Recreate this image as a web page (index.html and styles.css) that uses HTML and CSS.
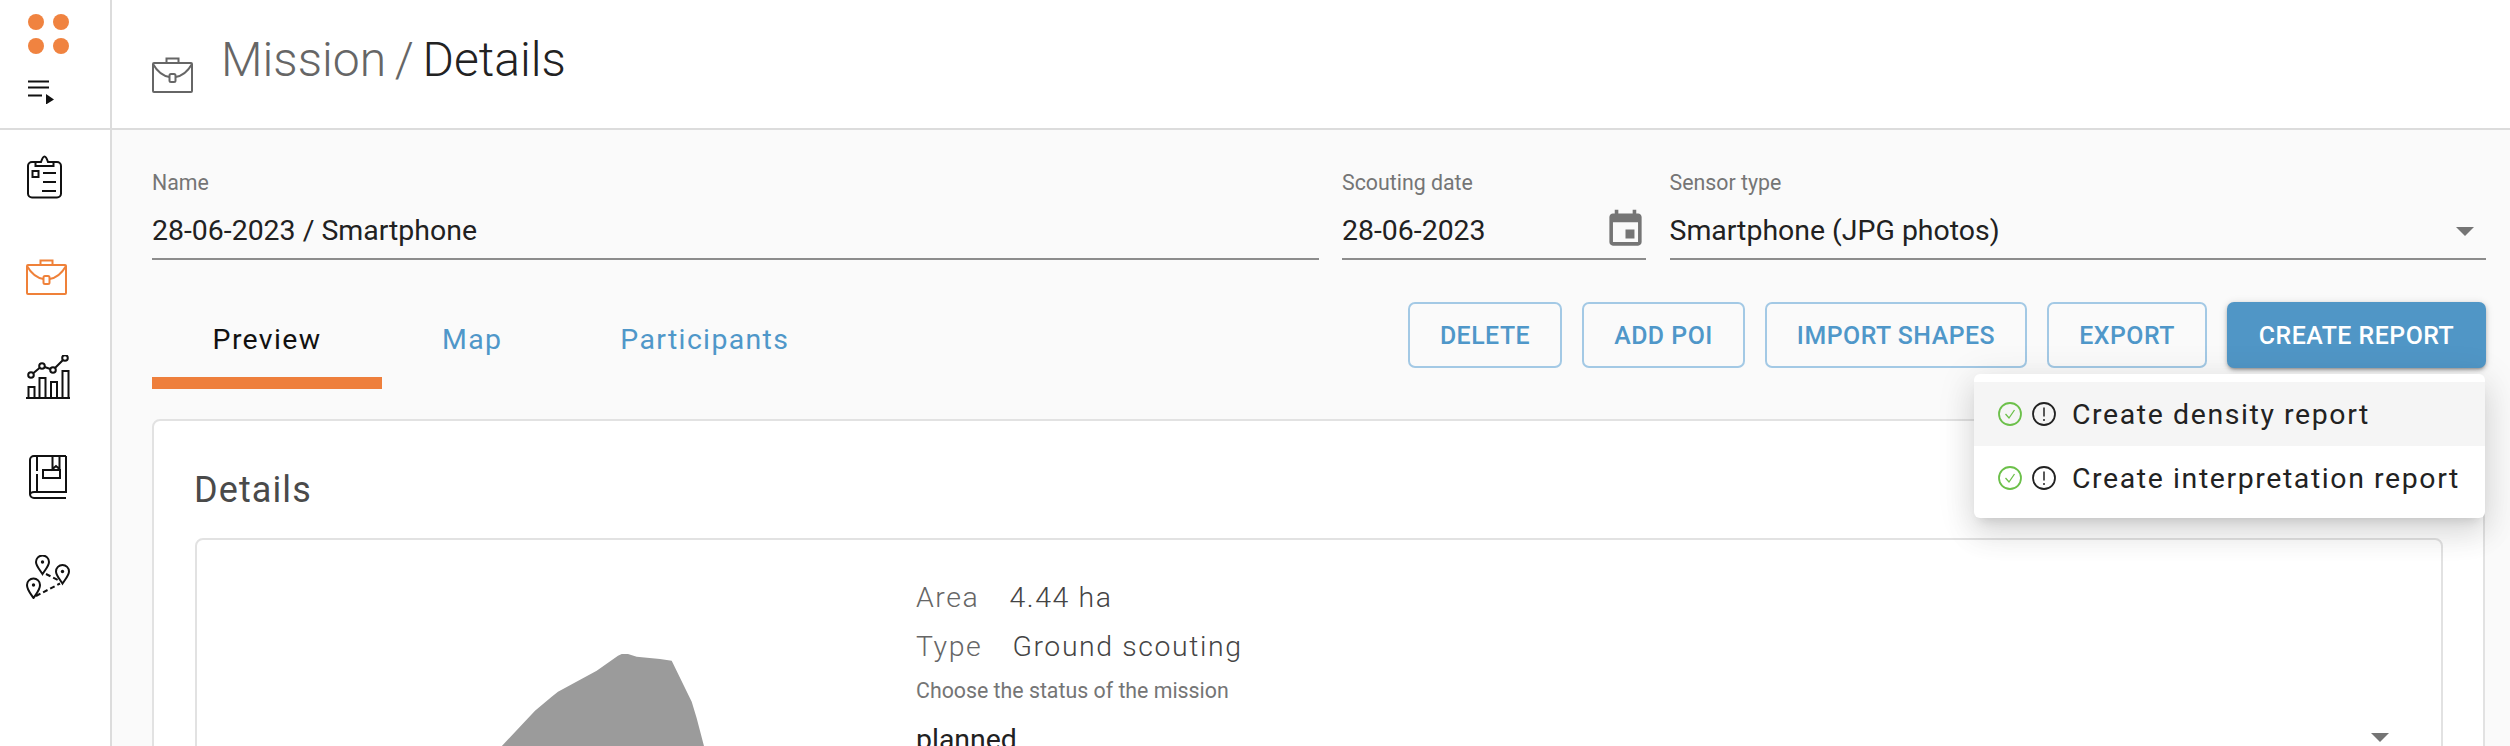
FILE: index.html
```html
<!DOCTYPE html>
<html lang="en">
<head>
<meta charset="utf-8">
<title>Mission / Details</title>
<link rel="stylesheet" href="styles.css">
</head>
<body>
<div class="app">
  <aside class="sidebar">
    <div class="brand">
      <div class="dots"><span class="dot"></span><span class="dot"></span><span class="dot"></span><span class="dot"></span></div>
      <svg class="menu-toggle" viewBox="0 0 28 24" width="28" height="24"><path d="M0 1.500h21M0 7.500h21M0 15.500h14" fill="none" stroke="#111" stroke-width="2"/><path d="M18 14l8 5.500-8 5z" fill="#111"/></svg>
    </div>
    <nav class="nav">
      <svg class="nav-icon" viewBox="0 0 44 44" width="44" height="44"><g fill="none" stroke="#111" stroke-width="2"><rect x="2" y="7" width="33" height="35.500" rx="4"/><path d="M9.500 11V7h5.500c1-3 2-5.500 3.500-5.500S21 4 22 7h5.500v4z" fill="#fff"/><rect x="6.500" y="16" width="6" height="6"/><path d="M17 18h13M17 27h13M16 36h14"/></g></svg>
      <svg class="nav-icon" viewBox="0 0 44 44" width="44" height="44"><use href="#case" transform="translate(0 4)" stroke="#ef8139"/></svg>
      <svg class="nav-icon" viewBox="0 0 44 44" width="44" height="44"><g fill="none" stroke="#111" stroke-width="2"><path d="M0 43h44" stroke-width="2"/><path d="M2.500 43V32h6v11M13.500 43V23h6v20M25 43V27h6v16M36.500 43V16h6v27"/><circle cx="5" cy="20" r="2.800"/><circle cx="16" cy="11" r="2.800"/><circle cx="27" cy="15" r="2.800"/><circle cx="39" cy="3" r="2.800"/><path d="M7.200 18.200l6.600-5.400M18.700 12l5.600 2M29 13l8-8"/></g></svg>
      <svg class="nav-icon" viewBox="0 0 44 44" width="44" height="44"><g fill="none" stroke="#111" stroke-width="2"><path d="M40 1H8a4 4 0 0 0-4 4v34a4 4 0 0 0 4 4h32M40 1v36H8a4 3 0 0 0-4 3"/><path d="M11 1v15M11 19v18"/><path d="M26.500 1v13l3.500-3 3.500 3V1"/><rect x="17" y="15" width="17" height="8"/></g></svg>
      <svg class="nav-icon" viewBox="0 0 44 44" width="44" height="44"><g fill="none" stroke="#111" stroke-width="2"><path d="M16.500 19C14 15 10 11 10 7a6.500 6.500 0 0 1 13 0c0 4-4 8-6.500 12z"/><path d="M36.500 28.500C34 24.500 30 20.500 30 16.500a6.500 6.500 0 0 1 13 0c0 4-4 8-6.500 12z"/><path d="M7.500 43C5 39 1 35 1 30a6.500 6.500 0 0 1 13 0c0 5-4 9-6.500 13z"/><path d="M20 19l13 6.500M10 41l24-12.500" stroke-dasharray="5 3"/></g><circle cx="16.500" cy="7" r="1.700" fill="#111"/><circle cx="36.500" cy="16.500" r="1.700" fill="#111"/><circle cx="7.500" cy="30" r="1.700" fill="#111"/></svg>
    </nav>
  </aside>

  <main class="main">
    <header class="page-header">
      <svg class="header-icon" viewBox="0 0 44 44" width="44" height="44"><use href="#case" stroke="#666"/></svg>
      <h1 class="title"><span class="crumb">Mission / </span><span class="current">Details</span></h1>
    </header>

    <section class="content">
      <div class="form-row">
        <div class="field">
          <label class="field-label">Name</label>
          <div class="field-value">28-06-2023 / Smartphone</div>
        </div>
        <div class="field">
          <label class="field-label">Scouting date</label>
          <div class="field-value">28-06-2023
            <svg class="calendar" viewBox="0 0 24 24" width="43" height="43"><path fill="#757575" d="M17 12h-5v5h5v-5zM16 1v2H8V1H6v2H5c-1.110 0-1.990.9-1.990 2L3 19c0 1.100.890 2 2 2h14c1.100 0 2-.9 2-2V5c0-1.100-.9-2-2-2h-1V1h-2zm3 18H5V8h14v11z"/></svg>
          </div>
        </div>
        <div class="field">
          <label class="field-label">Sensor type</label>
          <div class="field-value">Smartphone (JPG photos)<span class="caret"></span></div>
        </div>
      </div>

      <div class="toolbar">
        <div class="tabs">
          <div class="tab tab-active">Preview</div>
          <div class="tab tab-map">Map</div>
          <div class="tab tab-part">Participants</div>
        </div>
        <div class="actions">
          <button class="btn btn-delete">DELETE</button>
          <button class="btn btn-poi">ADD POI</button>
          <button class="btn btn-import">IMPORT SHAPES</button>
          <button class="btn btn-export">EXPORT</button>
          <button class="btn btn-primary">CREATE REPORT</button>
          <div class="menu">
            <div class="menu-item menu-item-hover">
              <svg class="status" viewBox="0 0 24 24" width="24" height="24"><circle cx="12" cy="12" r="11" fill="none" stroke="#6cc04a" stroke-width="1.800"/><path d="M7.500 12l3.500 4 5.500-8" fill="none" stroke="#6cc04a" stroke-width="1.300"/></svg>
              <svg class="status" viewBox="0 0 24 24" width="24" height="24"><circle cx="12" cy="12" r="11" fill="none" stroke="#222" stroke-width="1.800"/><path d="M12 5.500v9" stroke="#222" stroke-width="1.500"/><circle cx="12" cy="18" r="1" fill="#222"/></svg>
              <span class="menu-text">Create density report</span>
            </div>
            <div class="menu-item">
              <svg class="status" viewBox="0 0 24 24" width="24" height="24"><circle cx="12" cy="12" r="11" fill="none" stroke="#6cc04a" stroke-width="1.800"/><path d="M7.500 12l3.500 4 5.500-8" fill="none" stroke="#6cc04a" stroke-width="1.300"/></svg>
              <svg class="status" viewBox="0 0 24 24" width="24" height="24"><circle cx="12" cy="12" r="11" fill="none" stroke="#222" stroke-width="1.800"/><path d="M12 5.500v9" stroke="#222" stroke-width="1.500"/><circle cx="12" cy="18" r="1" fill="#222"/></svg>
              <span class="menu-text">Create interpretation report</span>
            </div>
          </div>
        </div>
      </div>

      <div class="card">
        <h2 class="card-title">Details</h2>
        <div class="inner">
          <svg class="shape" viewBox="197 540 719 208" width="719" height="208"><path fill="#9b9b9b" d="M500 748L535 710.700 551.700 696.700 558 691.700 596.700 670.700 618 655.700 621.700 654 628 654 636.700 656.700 660 659 671.700 660.700 691.700 701.700 696.700 718.300 704.500 748z"/></svg>
          <div class="info">
            <div class="info-row"><span>Area</span><span class="info-value">4.44 ha</span></div>
            <div class="info-row"><span>Type</span><span class="info-value">Ground scouting</span></div>
            <div class="status-label">Choose the status of the mission</div>
            <div class="status-select">planned<span class="caret"></span></div>
          </div>
        </div>
      </div>
    </section>
  </main>
</div>
<svg class="defs" width="0" height="0">
  <defs>
    <g id="case" fill="none" stroke-width="2">
      <rect x="1" y="6" width="39" height="29" rx="1"/>
      <path d="M14.500 6V1.500h12V6"/>
      <rect x="17.500" y="17" width="6" height="8" rx="1.500"/>
      <path d="M1 7c4 7 10 12 16.500 13M23.500 20C30 19 36 14 40 7"/>
    </g>
  </defs>
</svg>
</body>
</html>
```

FILE: styles.css
```css
* { box-sizing: border-box; }
html, body { margin: 0; height: 100%; }
body {
  font-family: Roboto, "Liberation Sans", sans-serif;
  color: #212121;
  background: #fff;
  overflow: hidden;
}
.defs { position: absolute; }
.app {
  display: grid;
  grid-template-columns: 112px 1fr;
  height: 746px;
  overflow: hidden;
}

/* Sidebar */
.sidebar { border-right: 2px solid #dcdcdc; background: #fff; }
.brand {
  height: 130px;
  border-bottom: 2px solid #dcdcdc;
  padding: 14px 0 0 28px;
}
.dots {
  display: grid;
  grid-template-columns: 16px 16px;
  gap: 8px 9px;
}
.dot { width: 16px; height: 16px; border-radius: 50%; background: #f08340; }
.menu-toggle { display: block; margin-top: 26px; }
.nav {
  display: flex;
  flex-direction: column;
  gap: 56px;
  padding: 25px 0 0 26px;
}
.nav-icon { display: block; }

/* Header */
.main { min-width: 0; display: flex; flex-direction: column; overflow: hidden; }
.page-header {
  height: 130px;
  flex: none;
  border-bottom: 2px solid #dcdcdc;
  padding-left: 40px;
  display: flex;
  background: #fff;
}
.header-icon { margin-top: 57px; flex: none; }
.title {
  margin: 0 0 0 25px;
  padding-top: 31px;
  font-size: 48px;
  line-height: 58px;
  font-weight: 300;
  word-spacing: -3px;
}
.crumb { color: #666; }
.current { color: #222; }

/* Form */
.content {
  flex: 1;
  min-height: 0;
  background: #fafafa;
  padding: 40px 24px 0 40px;
}
.form-row {
  display: grid;
  grid-template-columns: 1166.5px 304px 1fr;
  column-gap: 23.5px;
}
.field { height: 90px; }
.field-label {
  display: block;
  font-size: 21.33px;
  line-height: 26px;
  color: #757575;
}
.field-value {
  display: flex;
  align-items: center;
  justify-content: space-between;
  height: 64px;
  padding-top: 6px;
  border-bottom: 2px solid #8c8c8c;
  font-size: 28.44px;
  color: #212121;
}
.calendar { margin-right: -1px; margin-top: -2px; }
.field-value > .caret { margin-top: 2px; }
.caret {
  width: 0;
  height: 0;
  margin-right: 12px;
  border-left: 9px solid transparent;
  border-right: 9px solid transparent;
  border-top: 9px solid #757575;
}

/* Tabs and buttons */
.toolbar {
  display: flex;
  justify-content: space-between;
  margin-top: 42px;
  height: 87px;
}
.tabs { display: flex; }
.tab {
  height: 87px;
  padding-top: 20px;
  font-size: 28.44px;
  line-height: 36px;
  letter-spacing: 1.35px;
  color: #4f97c9;
}
.tab-active {
  width: 230px;
  text-align: center;
  color: #111;
  border-bottom: 12px solid #ee7f3c;
}
.tab-map { margin-left: 60px; }
.tab-part { margin-left: 118px; }
.actions { position: relative; display: flex; gap: 20px; align-items: flex-start; }
.btn {
  height: 66px;
  padding: 0;
  border: 2px solid #a3c9e5;
  border-radius: 7px;
  background: transparent;
  font-family: inherit;
  font-size: 24.89px;
  font-weight: 500;
  letter-spacing: 0.5px;
  color: #4f97c9;
}
.btn-delete { width: 154px; }
.btn-poi { width: 163px; }
.btn-import { width: 262px; }
.btn-export { width: 160px; }
.btn-primary {
  width: 259px;
  border-color: #5096c6;
  background: #5096c6;
  color: #fff;
  box-shadow: 0 3px 3px -2px rgba(0,0,0,.25), 0 2px 4px rgba(0,0,0,.2), 0 1px 8px rgba(0,0,0,.12);
}
.menu {
  position: absolute;
  top: 72px;
  right: 1px;
  width: 511px;
  padding: 8px 0;
  background: #fff;
  border-radius: 6px;
  box-shadow: 0 8px 10px -6px rgba(0,0,0,.12), 0 16px 30px 2px rgba(0,0,0,.09), 0 6px 36px 5px rgba(0,0,0,.08);
  z-index: 2;
}
.menu-item {
  display: flex;
  align-items: center;
  height: 64px;
  padding-left: 24px;
  gap: 10px;
}
.menu-item-hover { background: #f5f5f5; }
.menu-text {
  margin-left: 6px;
  font-size: 28.44px;
  letter-spacing: 1.6px;
  color: #222;
}

/* Card */
.card {
  height: 500px;
  margin-top: 30px;
  margin-right: 1px;
  padding: 0 40px 0 41px;
  background: #fff;
  border: 2px solid #e2e2e2;
  border-radius: 8px;
}
.card-title {
  margin: 0 0 0 -1px;
  padding-top: 47px;
  height: 117px;
  font-size: 36px;
  line-height: 44px;
  font-weight: 400;
  letter-spacing: 1.1px;
  color: #4a4a4a;
}
.inner {
  display: flex;
  height: 400px;
  border: 2px solid #e2e2e2;
  border-radius: 8px;
}
.shape { display: block; flex: none; }
.info { flex: 1; padding-top: 40px; }
.info-row {
  display: flex;
  gap: 30px;
  height: 49px;
  font-size: 28.44px;
  line-height: 36px;
  font-weight: 300;
  letter-spacing: 1.6px;
  color: #444;
}
.info-row > span:first-child { color: #666; }
.status-label { font-size: 21.33px; line-height: 26px; color: #757575; }
.status-select {
  display: flex;
  justify-content: space-between;
  align-items: center;
  margin-top: 19px;
  padding-right: 40px;
  font-size: 28.44px;
  line-height: 34px;
  color: #212121;
}
.status-select .caret { margin-top: -6px; }
```
